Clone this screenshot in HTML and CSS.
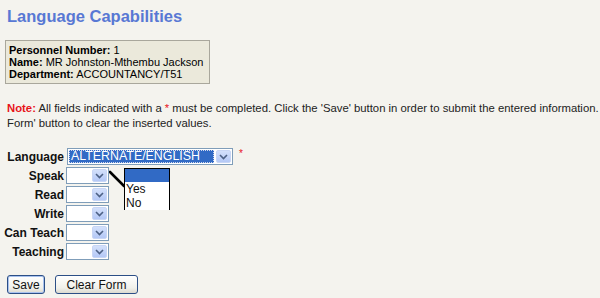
FILE: index.html
```html
<!DOCTYPE html>
<html>
<head>
<meta charset="utf-8">
<link rel="stylesheet" href="styles.css">
</head>
<body>
<h1 class="title">Language Capabilities</h1>
<div class="info">
  <div><b>Personnel Number:</b> 1</div>
  <div><b>Name:</b> MR Johnston-Mthembu Jackson</div>
  <div><b>Department:</b> ACCOUNTANCY/T51</div>
</div>
<p class="note"><span class="note-label">Note:</span> All fields indicated with a <span class="req">*</span> must be completed. Click the 'Save' button in order to submit the entered information. Click the 'Clear<br>Form' button to clear the inserted values.</p>
<div class="form">
  <div class="row">
    <div class="label">Language</div>
    <div class="select wide">
      <div class="value"><span class="sel-text">ALTERNATE/ENGLISH</span></div>
      <div class="btn"><svg width="9" height="6" viewBox="0 0 9 6"><path d="M1 1 L4.5 4.5 L8 1" fill="none" stroke="#4d6185" stroke-width="1.6"/></svg></div>
    </div>
    <span class="req star">*</span>
  </div>
  <div class="row">
    <div class="label">Speak</div>
    <div class="select small">
      <div class="value"></div>
      <div class="btn"><svg width="9" height="6" viewBox="0 0 9 6"><path d="M1 1 L4.5 4.5 L8 1" fill="none" stroke="#4d6185" stroke-width="1.6"/></svg></div>
    </div>
    <div class="popup">
      <div class="opt hl">&nbsp;</div>
      <div class="opt">Yes</div>
      <div class="opt">No</div>
    </div>
    <svg class="pointer" width="18" height="18" viewBox="0 0 18 18"><path d="M1 2 L15 16" stroke="#000" stroke-width="2.6" stroke-linecap="round"/></svg>
  </div>
  <div class="row">
    <div class="label">Read</div>
    <div class="select small">
      <div class="value"></div>
      <div class="btn"><svg width="9" height="6" viewBox="0 0 9 6"><path d="M1 1 L4.5 4.5 L8 1" fill="none" stroke="#4d6185" stroke-width="1.6"/></svg></div>
    </div>
  </div>
  <div class="row">
    <div class="label">Write</div>
    <div class="select small">
      <div class="value"></div>
      <div class="btn"><svg width="9" height="6" viewBox="0 0 9 6"><path d="M1 1 L4.5 4.5 L8 1" fill="none" stroke="#4d6185" stroke-width="1.6"/></svg></div>
    </div>
  </div>
  <div class="row">
    <div class="label">Can Teach</div>
    <div class="select small">
      <div class="value"></div>
      <div class="btn"><svg width="9" height="6" viewBox="0 0 9 6"><path d="M1 1 L4.5 4.5 L8 1" fill="none" stroke="#4d6185" stroke-width="1.6"/></svg></div>
    </div>
  </div>
  <div class="row">
    <div class="label">Teaching</div>
    <div class="select small">
      <div class="value"></div>
      <div class="btn"><svg width="9" height="6" viewBox="0 0 9 6"><path d="M1 1 L4.5 4.5 L8 1" fill="none" stroke="#4d6185" stroke-width="1.6"/></svg></div>
    </div>
  </div>
</div>
<div class="actions">
  <button class="button save">Save</button>
  <button class="button clear">Clear Form</button>
</div>
</body>
</html>
```
FILE: styles.css
```css
html { overflow: hidden; }
body {
  margin: 0;
  padding: 0;
  background: #f4f3ee;
  font-family: "Liberation Sans", Arial, sans-serif;
  color: #111;
  width: 600px;
  height: 298px;
  overflow: hidden;
}
.title {
  margin: 0;
  padding: 6px 0 0 7px;
  font-size: 16.5px;
  line-height: 20px;
  font-weight: bold;
  color: #5878d4;
}
.info {
  margin: 14px 0 0 5px;
  width: 198px;
  background: #ebe9db;
  border: 1px solid #a9a79c;
  padding: 3px 2px 3px 3px;
  font-size: 11px;
  line-height: 12px;
  color: #000;
}
.note {
  margin: 17px 0 0 7px;
  font-size: 11.32px;
  line-height: 15px;
  white-space: nowrap;
  color: #222;
}
.note-label { color: #e8131b; font-weight: bold; }
.req { color: #e8131b; }
.form {
  margin-top: 17px;
  display: flex;
  flex-direction: column;
  gap: 2px;
}
.row {
  position: relative;
  display: flex;
  align-items: center;
  height: 17px;
}
.label {
  width: 64px;
  text-align: right;
  font-size: 12px;
  font-weight: bold;
  color: #111;
  padding-right: 2px;
}
.select {
  display: flex;
  height: 17px;
  box-sizing: border-box;
  border: 1px solid #7f9db9;
  background: #fff;
}
.select.wide { width: 166px; margin-left: 1px; }
.select.small { width: 43px; }
.select .value {
  flex: 1;
  padding: 1px;
  display: flex;
}
.sel-text {
  flex: 1;
  background: #316ac5;
  color: #fff;
  font-size: 12.4px;
  line-height: 13px;
  padding-left: 2px;
  outline: 1px dotted #d0d8ee;
  outline-offset: -1px;
}
.select .btn {
  width: 15px;
  margin: 1px;
  border-radius: 2px;
  background: linear-gradient(#d3e0fb, #b4c8f6);
  border: 1px solid #c8d6f5;
  box-sizing: border-box;
  display: flex;
  align-items: center;
  justify-content: center;
}
.star {
  font-size: 10px;
  margin-left: 6px;
  align-self: flex-start;
  line-height: 12px;
}
.popup {
  position: absolute;
  left: 124px;
  top: 1px;
  width: 46px;
  box-sizing: border-box;
  background: #fff;
  border: 1px solid #000;
  border-bottom: none;
  font-size: 12px;
  line-height: 14px;
  color: #111;
  z-index: 2;
}
.popup .opt { padding-left: 1px; height: 14px; }
.popup .opt.hl { background: #316ac5; height: 13px; }
.pointer {
  position: absolute;
  left: 109px;
  top: 3px;
}
.actions {
  margin: 15px 0 0 7px;
  display: flex;
  gap: 10px;
}
.button {
  font-family: "Liberation Sans", Arial, sans-serif;
  font-size: 12px;
  height: 19px;
  padding: 0;
  border: 1px solid #2c4f86;
  border-radius: 3px;
  background: linear-gradient(#ffffff, #f0f0ea 70%, #dcdad0);
  color: #111;
}
.button.save {
  width: 38px;
  box-shadow: inset 0 0 0 1px #a9c2ee;
}
.button.clear { width: 83px; }
```
